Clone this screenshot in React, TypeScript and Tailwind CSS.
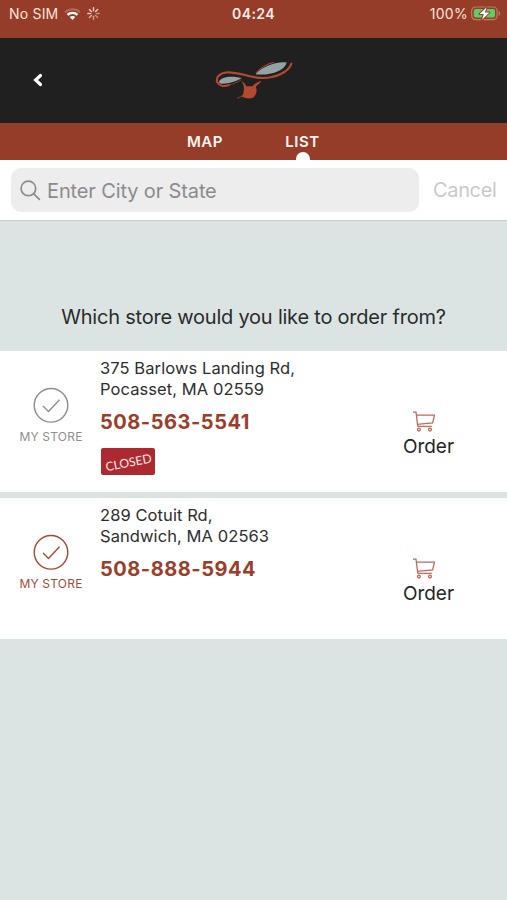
import clsx from 'clsx';

type Store = {
  street: string;
  city: string;
  phone: string;
  closed: boolean;
  mine: boolean;
};

const stores: Store[] = [
  { street: '375 Barlows Landing Rd,', city: 'Pocasset, MA 02559', phone: '508-563-5541', closed: true, mine: false },
  { street: '289 Cotuit Rd,', city: 'Sandwich, MA 02563', phone: '508-888-5944', closed: false, mine: true },
];

function WifiIcon() {
  return (
    <svg className="w-[17px] h-[13px]" viewBox="0 0 17 13" fill="none">
      <path d="M1.2 4.2C5.2.2 11.8.2 15.8 4.2" stroke="#b56a58" strokeWidth="2" />
      <path d="M3.5 6.8c2.8-2.6 7.2-2.6 10 0" stroke="#fff" strokeWidth="2.3" />
      <path d="M5.7 9c1.6-1.4 4-1.4 5.6 0L8.5 11.9z" fill="#fff" />
    </svg>
  );
}

function SpinnerIcon() {
  return (
    <svg className="w-[13px] h-[13px]" viewBox="0 0 13 13" stroke="#fbe3dc" strokeWidth="1.4" strokeLinecap="round">
      <path d="M6.5.7v3" opacity=".9" />
      <path d="M10.6 2.4 8.6 4.4" opacity=".9" />
      <path d="M12.3 6.5h-3" opacity=".45" />
      <path d="m10.6 10.6-2-2" opacity=".5" />
      <path d="M6.5 12.3v-3" opacity=".6" />
      <path d="m2.4 10.6 2-2" opacity=".7" />
      <path d="M.7 6.5h3" opacity=".8" />
      <path d="m2.4 2.4 2 2" opacity=".85" />
    </svg>
  );
}

function BatteryIcon() {
  return (
    <svg className="w-[31px] h-[16px]" viewBox="0 0 31 16" fill="none">
      <rect x=".7" y="1" width="25.4" height="12.6" rx="3.8" stroke="#bd7c6b" strokeWidth="1.2" />
      <rect x="2.8" y="3" width="21.2" height="8.6" rx="2" fill="#5fce68" />
      <path d="M27.6 5c2.1.6 2.1 4.2 0 4.8z" fill="#bd7c6b" />
      <path
        d="M15.6 1.2 8.6 8h4.2l-1.8 5.8 7.4-7.4h-4.5z"
        fill="#fff"
        stroke="#963d29"
        strokeWidth="2"
        strokeLinejoin="round"
        paintOrder="stroke"
      />
    </svg>
  );
}

function Logo() {
  return (
    <svg className="w-[80px] h-[42px]" viewBox="0 0 80 42" fill="none">
      <path d="M5 21.6C7 17.2 16 15.2 27.5 18 22.5 21.8 11 24.6 6.5 23.4 5.3 23 4.7 22.4 5 21.6z" fill="#94a3a3" />
      <path d="M41.5 14.4C47 7.6 60 1.4 72.7 2.4 71 10.5 57 15.8 41.5 14.4z" fill="#94a3a3" />
      <path
        d="M15 25C9.5 26.8 5 25.6 3.5 22.6 1.2 17.8 5.5 13.2 12 12.5 23 11.3 34 17.2 46 17.9 61 18.8 74.5 12 77.3 3.8"
        stroke="#b34a30"
        strokeWidth="2.2"
        strokeLinecap="round"
      />
      <path d="M15 25c5-1.2 9-3 12.5-5.4" stroke="#8c3b28" strokeWidth="1" />
      <path d="M42 13C47 7.6 52 4 60 2.2" stroke="#a7462f" strokeWidth="1.1" />
      <path
        d="M27 20.8c2.6 1 4.4 3.2 5.1 5.4h6.4c1.9-2.4 4.9-4.6 8.6-5.3-.8 2.2-3.6 3.7-5.2 5.8 1.2 3.6 1.2 8-3.4 11.2-4 1.1-8 .3-11.5-1.8 2.2-1 2.4-2.5 2.6-4.6.5-3.5.7-7.2-2.6-10.7z"
        fill="#b34a30"
      />
      <path d="m23 38.4 5-2" stroke="#8c3b28" strokeWidth="1" />
    </svg>
  );
}

function CheckCircle() {
  return (
    <svg className="w-9 h-9" viewBox="0 0 36 36" fill="none" stroke="currentColor" strokeWidth="1.4">
      <circle cx="18" cy="18.3" r="16.8" />
      <path d="m10 19.1 5.5 5.5L26.5 12.8" />
    </svg>
  );
}

function CartIcon() {
  return (
    <svg className="w-[23px] h-[22px]" viewBox="0 0 23 22" fill="none" stroke="#c0695c" strokeWidth="1.3">
      <path d="M1 1.2h3l1.8 14" />
      <path d="M4.4 4.1h18.1L20.6 11.8 5.2 13.4" />
      <path d="M5.6 15.4h14.2" />
      <circle cx="6.9" cy="18.6" r="1.4" />
      <circle cx="18" cy="18.6" r="1.4" />
    </svg>
  );
}

function StoreRow({ store }: { store: Store }) {
  return (
    <article className="flex h-[141px] bg-white">
      <div
        className={clsx(
          'flex w-[100px] shrink-0 flex-col items-center pt-9 pl-0.5',
          store.mine ? 'text-[#a44a37]' : 'text-[#8e8e8e]'
        )}
      >
        <CheckCircle />
        <span className="mt-1.5 text-[12px] leading-4 tracking-[0.2px] whitespace-nowrap">MY STORE</span>
      </div>
      <div className="flex-1 pt-[7px] whitespace-nowrap">
        <p className="text-[16.5px] leading-[20.5px] tracking-[0.08px] text-[#2e2e2e]">{store.street}</p>
        <p className="text-[16.5px] leading-[20.5px] tracking-[0.08px] text-[#2e2e2e]">{store.city}</p>
        <p className="mt-[9px] text-[20px] leading-[28px] font-bold tracking-[0.52px] text-[#9b3e29]">{store.phone}</p>
        {store.closed && (
          <div className="mt-3 ml-[1px] flex h-[27px] w-[54px] items-center justify-center rounded-[2px] bg-[#ad2931]">
            <span className="-rotate-[11deg] pt-[3px] pl-px font-['Lato','Open_Sans',sans-serif] text-[12.2px] leading-none text-[#ffe9e4]">CLOSED</span>
          </div>
        )}
      </div>
      <button className="flex w-[158px] shrink-0 flex-col items-center pt-[60px] text-[#252525]">
        <span className="mr-[9px]"><CartIcon /></span>
        <span className="mt-0.5 ml-[1px] text-[19px] leading-6">Order</span>
      </button>
    </article>
  );
}

export default function App() {
  return (
    <div className="h-[900px] w-[507px] overflow-hidden bg-[#dce4e3] font-['Inter',sans-serif]">
      {/* Status bar */}
      <div className="grid h-[38px] grid-cols-3 bg-[#963d29] pt-1 text-[14px] leading-5 text-[#fbe3dc]">
        <div className="flex h-5 items-center pl-[9px]">
          <span className="tracking-[0.2px]">No SIM</span>
          <span className="ml-1.5"><WifiIcon /></span>
          <span className="mb-0.5 ml-[6px]"><SpinnerIcon /></span>
        </div>
        <div className="text-center font-semibold tracking-[0.4px] text-[#ffeee9]">04:24</div>
        <div className="flex h-5 items-center justify-end pr-[5px]">
          <span className="mr-[3px] tracking-[0.3px]">100%</span>
          <BatteryIcon />
        </div>
      </div>

      {/* Header */}
      <header className="grid h-[85px] grid-cols-[1fr_80px_1fr] items-center bg-[#202020]">
        <button className="pb-px pl-[32px]">
          <svg className="h-[14px] w-[10px]" viewBox="0 0 10 14" fill="none" stroke="#fff" strokeWidth="3.2" strokeLinecap="round">
            <path d="M8.5 2.5 3.6 7l4.9 4.5" />
          </svg>
        </button>
        <Logo />
      </header>

      {/* Tabs */}
      <nav className="flex h-[37px] bg-[#963d29] pl-[156px] text-[15px] font-semibold tracking-[0.5px] text-[#fff4f1]">
        <button className="h-[37px] w-[98px] pt-0.5">MAP</button>
        <button className="relative h-[37px] w-[97px] overflow-hidden pt-0.5">
          LIST
          <span className="absolute -bottom-[6px] left-[42px] size-[14px] rounded-full bg-white" />
        </button>
      </nav>

      {/* Search */}
      <div className="flex h-[61px] items-center border-b border-[#c9cfce] bg-white pl-[11px]">
        <div className="flex h-[44px] w-[408px] items-center rounded-[10px] bg-[#ededed] pl-[9px] text-[#8b8b8e]">
          <svg className="h-[21px] w-[21px]" viewBox="0 0 21 21" fill="none" stroke="currentColor" strokeWidth="1.7" strokeLinecap="round">
            <circle cx="8.4" cy="8.4" r="7.3" />
            <path d="m13.8 13.8 5.6 5.6" />
          </svg>
          <span className="ml-1.5 pt-0.5 text-[20px] tracking-[-0.13px]">Enter City or State</span>
        </div>
        <button className="ml-[14px] text-[20px] tracking-[-0.35px] text-[#c9c9c9]">Cancel</button>
      </div>

      <h1 className="flex h-[130px] items-end justify-center pb-[19px] text-[20px] leading-[30px] tracking-[-0.22px] whitespace-nowrap text-[#292c2c]">
        Which store would you like to order from?
      </h1>

      <main className="flex flex-col gap-[6px]">
        {stores.map((store) => (
          <StoreRow key={store.phone} store={store} />
        ))}
      </main>
    </div>
  );
}
